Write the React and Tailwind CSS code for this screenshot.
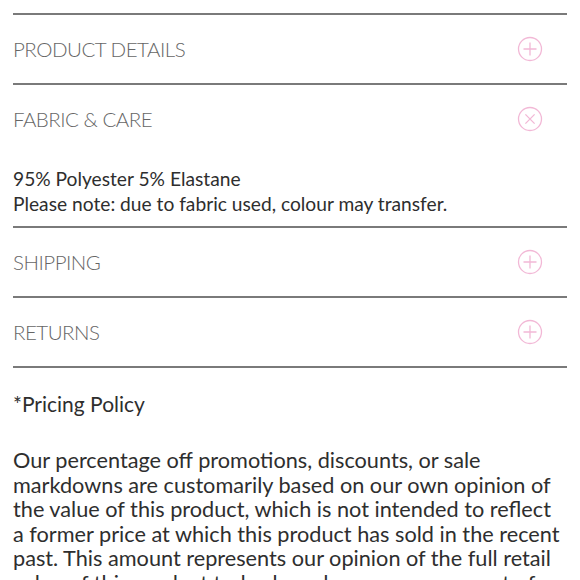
import React from 'react'

const PlusIcon = () => (
    <svg width="26" height="26" viewBox="0 0 26 26" fill="none" stroke="#f2b8d6" strokeWidth="1.3">
        <circle cx="13" cy="13" r="11.5" />
        <path d="M13 6.5v13M6.5 13h13" />
    </svg>
)

const CloseIcon = () => (
    <svg width="26" height="26" viewBox="0 0 26 26" fill="none" stroke="#f2b8d6" strokeWidth="1.3">
        <circle cx="13" cy="13" r="11.5" />
        <path d="M8.4 8.4l9.2 9.2M17.6 8.4l-9.2 9.2" />
    </svg>
)

const Row = ({ title, open, children }) => (
    <div className="border-t-2 border-[#7a7a7a]">
        <div className="h-[68px] flex items-center justify-between pr-[24px]">
            <span className="text-[20.5px] font-light text-[#666] tracking-[-0.5px]">{title}</span>
            {open ? <CloseIcon /> : <PlusIcon />}
        </div>
        {children}
    </div>
)

const App = () => {
    return (
        <div className="bg-white w-[580px] h-[580px] overflow-hidden pt-[13px] px-[13px]" style={{ fontFamily: 'Lato, "Open Sans", sans-serif' }}>
            <Row title="PRODUCT DETAILS" />
            <Row title="FABRIC & CARE" open>
                <div className="pt-[13px] pb-[10px] text-[19.2px] leading-[25px] text-[#2e2e2e]">
                    <p>95% Polyester 5% Elastane</p>
                    <p>Please note: due to fabric used, colour may transfer.</p>
                </div>
            </Row>
            <Row title="SHIPPING" />
            <Row title="RETURNS" />
            <div className="border-t-2 border-[#7a7a7a]"></div>

            <p className="mt-[22px] text-[21px] leading-[28px] text-[#2e2e2e]">*Pricing Policy</p>
            <p className="mt-[30px] text-[21.7px] leading-[24.6px] text-[#2e2e2e] whitespace-nowrap">
                Our percentage off promotions, discounts, or sale<br />
                markdowns are customarily based on our own opinion of<br />
                the value of this product, which is not intended to reflect<br />
                a former price at which this product has sold in the recent<br />
                past. This amount represents our opinion of the full retail<br />
                value of this product today based on our assessment of
            </p>
        </div>
    );
};

export default App;
